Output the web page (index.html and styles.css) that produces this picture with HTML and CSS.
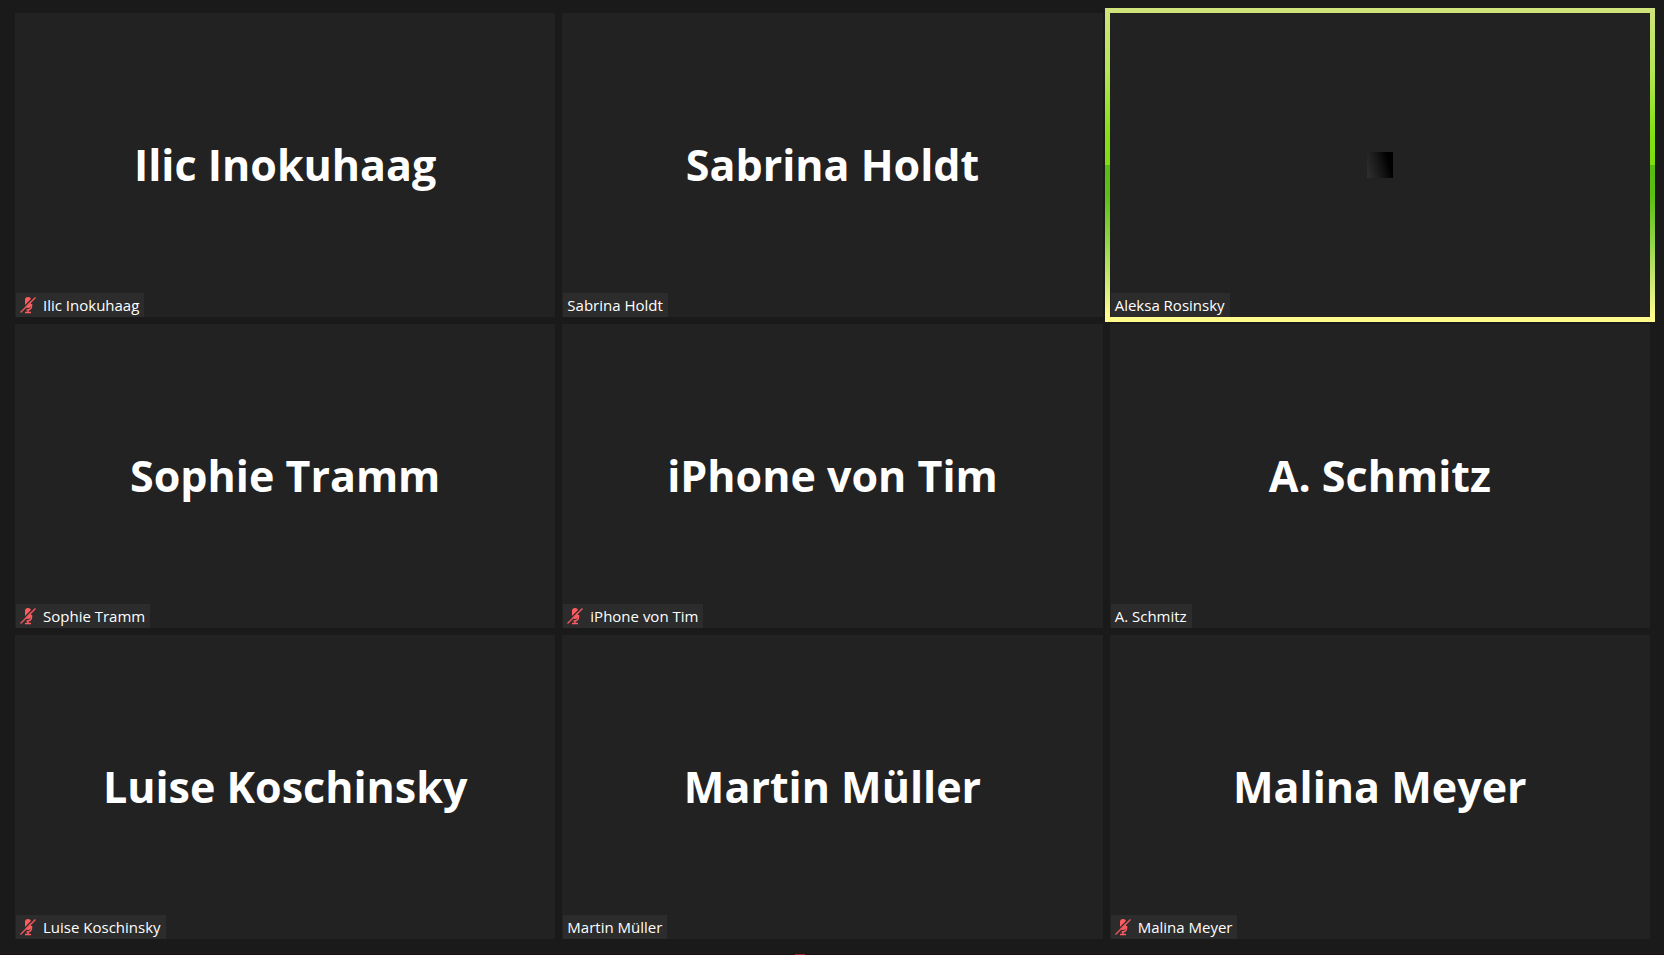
FILE: index.html
```html
<!DOCTYPE html>
<html lang="de">
<head>
  <meta charset="UTF-8">
  <title>Meeting</title>
  <link rel="stylesheet" href="styles.css">
</head>
<body>
  <svg class="sprite">
    <symbol id="mic-off" viewBox="0 0 16 17">
      <rect x="5" y="0" width="6" height="11" rx="3" fill="#ff5c61"/>
      <path d="M11.500 7v2c0 3-2 4-5 4M8 12v4M5 15.500h6" fill="none" stroke="#ff5c61" stroke-width="1.500"/>
      <path d="M14 0L0 14" stroke="#2c2c2c" stroke-width="1.500"/>
      <path d="M15.500 0.500L0.500 15.500" stroke="#e8575b" stroke-width="1.500"/>
    </symbol>
  </svg>

  <main class="gallery">
    <section class="tile">
      <h2>Ilic Inokuhaag</h2>
      <p class="label"><svg class="mic"><use href="#mic-off"/></svg>Ilic Inokuhaag</p>
    </section>
    <section class="tile">
      <h2>Sabrina Holdt</h2>
      <p class="label">Sabrina Holdt</p>
    </section>
    <section class="tile speaking">
      <div class="picture"></div>
      <p class="label">Aleksa Rosinsky</p>
    </section>
    <section class="tile">
      <h2>Sophie Tramm</h2>
      <p class="label"><svg class="mic"><use href="#mic-off"/></svg>Sophie Tramm</p>
    </section>
    <section class="tile">
      <h2>iPhone von Tim</h2>
      <p class="label"><svg class="mic"><use href="#mic-off"/></svg>iPhone von Tim</p>
    </section>
    <section class="tile">
      <h2>A. Schmitz</h2>
      <p class="label">A. Schmitz</p>
    </section>
    <section class="tile">
      <h2>Luise Koschinsky</h2>
      <p class="label"><svg class="mic"><use href="#mic-off"/></svg>Luise Koschinsky</p>
    </section>
    <section class="tile">
      <h2>Martin Müller</h2>
      <p class="label">Martin Müller</p>
    </section>
    <section class="tile">
      <h2>Malina Meyer</h2>
      <p class="label"><svg class="mic"><use href="#mic-off"/></svg>Malina Meyer</p>
    </section>
  </main>
  <footer class="edge"><span class="marker"></span></footer>
</body>
</html>
```

FILE: styles.css
```css
body {
  margin: 0;
  height: 100vh;
  display: flex;
  flex-direction: column;
  background: #1a1a1a;
  color: #fff;
  font-family: "Open Sans", "Noto Sans", sans-serif;
}

.sprite {
  display: none;
}

.gallery {
  flex: 1;
  padding: 13px 14px 15px 15px;
  display: grid;
  grid-template-columns: repeat(3, 1fr);
  grid-template-rows: repeat(3, 1fr);
  gap: 7px;
}

.tile {
  position: relative;
  display: flex;
  align-items: center;
  justify-content: center;
  background: #222;
}

h2 {
  margin: 0;
  font-size: 43px;
  line-height: 60px;
  font-weight: 700;
}

.label {
  position: absolute;
  left: 1px;
  bottom: 0;
  display: flex;
  align-items: center;
  gap: 7px;
  margin: 0;
  padding: 0 5px 0 4px;
  background: #2c2c2c;
  font-size: 15px;
  line-height: 24px;
}

.mic {
  width: 16px;
  height: 17px;
}

/* active speaker frame */
.speaking::before {
  content: "";
  position: absolute;
  inset: -5px;
  border: 5px solid;
  border-image: linear-gradient(#d0e47c, #b5e655 20%, #84e010 40%, #80de0c 50%, #58bb12 50%, #5cc014 60%, #94d548 75%, #d9ed7c 90%, #fffc8c 98%) 5;
}

.picture {
  width: 26px;
  height: 26px;
  background: linear-gradient(75deg, #303030, #181818 45%, #000 80%);
}

.edge {
  display: flex;
  justify-content: center;
  height: 1px;
  background: #1c1014;
}

.marker {
  width: 10px;
  margin-right: 64px;
  background: #a02228;
}
```
